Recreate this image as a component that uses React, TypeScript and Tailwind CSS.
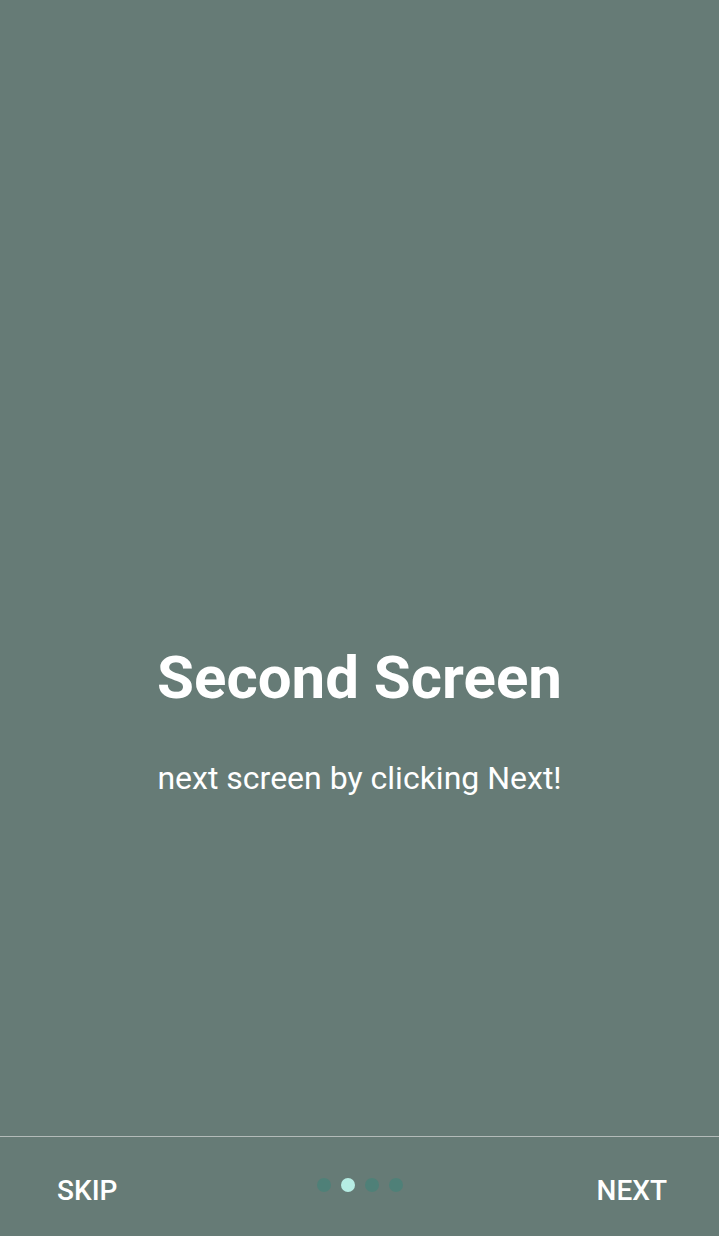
import React from 'react'

export default function App() {
  const dots = [false, true, false, false]
  return (
    <div className="w-[719px] h-[1236px] bg-[#667b76] flex flex-col font-['Roboto',sans-serif] text-white">
      <div className="flex-1 flex flex-col items-center pt-[638px]">
        <h1 className="text-[60px] leading-[80px] font-bold">Second Screen</h1>
        <p className="mt-[40px] text-[32px] leading-[40px]">next screen by clicking Next!</p>
      </div>
      <div className="h-px bg-[#b3bbb9]" />
      <div className="h-[99px] flex items-center justify-between pl-[57px] pr-[52px] pt-[8px]">
        <button className="text-[28px] font-medium w-[90px] text-left">SKIP</button>
        <div className="flex gap-[10px] -mt-[12px]">
          {dots.map((active, i) => (
            <span
              key={i}
              className={active ? 'w-[14px] h-[14px] rounded-full bg-[#b6ede4]' : 'w-[14px] h-[14px] rounded-full bg-[#4f8078]'}
            />
          ))}
        </div>
        <button className="text-[28px] font-medium w-[95px] text-right">NEXT</button>
      </div>
    </div>
  )
}
